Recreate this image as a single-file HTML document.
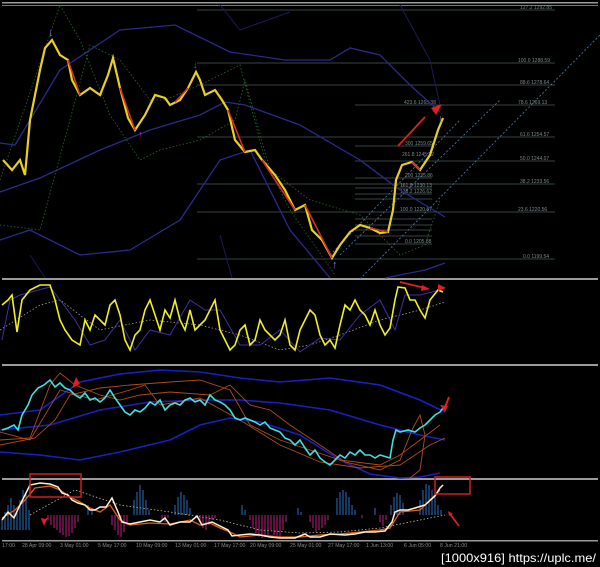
<!DOCTYPE html>
<html><head><meta charset="utf-8"><style>
html,body{margin:0;padding:0;background:#000;width:600px;height:567px;overflow:hidden}
svg{display:block}
text{font-family:"Liberation Sans",sans-serif}
</style></head><body>
<svg width="600" height="567" viewBox="0 0 600 567" xmlns="http://www.w3.org/2000/svg">
<rect width="600" height="567" fill="#000"/>
<!-- separators -->
<rect x="2" y="2" width="596" height="1.5" fill="#9a9a9a"/>
<rect x="2" y="5" width="596" height="1" fill="#777"/>
<rect x="2" y="278" width="596" height="2" fill="#9a9a9a"/>
<rect x="2" y="364" width="596" height="2" fill="#9a9a9a"/>
<rect x="2" y="478" width="596" height="2" fill="#9a9a9a"/>
<rect x="2" y="540" width="596" height="1.5" fill="#9a9a9a"/>

<!-- PANEL 1 fib lines -->
<g stroke="#4a5a5a" stroke-width="0.8">
<line x1="197" y1="10" x2="555" y2="10"/><line x1="197" y1="63" x2="555" y2="63"/>
<line x1="197" y1="85" x2="555" y2="85"/><line x1="355" y1="105" x2="555" y2="105"/>
<line x1="197" y1="137" x2="555" y2="137"/><line x1="355" y1="161" x2="555" y2="161"/>
<line x1="197" y1="184" x2="555" y2="184"/><line x1="197" y1="212" x2="555" y2="212"/>
<line x1="197" y1="259" x2="555" y2="259"/>
<line x1="355" y1="146" x2="432" y2="146"/><line x1="355" y1="178" x2="432" y2="178"/>
<line x1="355" y1="188" x2="432" y2="188"/><line x1="355" y1="194" x2="432" y2="194"/>
<line x1="355" y1="199" x2="432" y2="199"/><line x1="355" y1="219" x2="432" y2="219"/>
<line x1="355" y1="225" x2="432" y2="225"/><line x1="355" y1="230" x2="432" y2="230"/>
<line x1="355" y1="236" x2="432" y2="236"/><line x1="355" y1="244" x2="432" y2="244"/>
</g>
<g fill="#7a8a8a" font-size="5">
<text x="520" y="9">127.2 1292.85</text><text x="518" y="62">100.0 1288.59</text>
<text x="520" y="84">88.6 1278.64</text><text x="518" y="104">78.6 1269.13</text>
<text x="520" y="136">61.6 1254.57</text><text x="520" y="160">50.0 1244.07</text>
<text x="520" y="183">38.2 1233.56</text><text x="518" y="211">23.6 1220.56</text>
<text x="523" y="258">0.0 1199.54</text>
<text x="404" y="104">423.6 1265.38</text><text x="405" y="145">300 1259.65</text>
<text x="402" y="156">261.8 1245.12</text><text x="405" y="177">200 1235.86</text>
<text x="400" y="187">161.8 1230.13</text><text x="400" y="193">138.2 1226.62</text>
<text x="400" y="211">100.0 1220.87</text><text x="405" y="243">0.0 1205.88</text>
</g>
<!-- diagonal dotted -->
<g stroke="#4f7fae" stroke-width="0.8" stroke-dasharray="2,2" fill="none">
<line x1="340" y1="255" x2="500" y2="100"/><line x1="360" y1="279" x2="600" y2="35"/>
<line x1="330" y1="255" x2="460" y2="120"/>
</g>
<!-- bollinger bands -->
<g fill="none" stroke="#2a2a8a" stroke-width="1.3">
<path d="M0,143 L15,145 L60,70 L120,30 L175,25 L230,52 L285,60 L330,60 L350,48 L380,55 L410,85 L440,112"/>
<path d="M0,192 L40,178 L100,150 L150,130 L200,115 L225,102 L245,105 L300,125 L360,160 L400,190 L445,217"/>
<path d="M0,240 L30,230 L80,255 L130,250 L180,220 L220,160 L250,150 L290,230 L330,278"/>
<path d="M385,278 L425,270 L445,263"/>
</g>
<g fill="none" stroke="#1a1a5a" stroke-width="1">
<path d="M220,5 L240,30 L290,12"/><path d="M400,5 L430,60 L440,105"/><path d="M30,255 L45,278"/><path d="M220,235 L232,278"/>
</g>
<g fill="none" stroke="#2a6a2a" stroke-width="0.8" stroke-dasharray="1.5,2">
<path d="M0,225 L40,230 L70,120 L90,45 L120,60 L150,100 L165,100 L200,85 L240,65 L265,160 L290,210 L335,275"/>
<path d="M0,180 L60,5 L80,40 L110,115 L140,160 L160,150 L200,140 L235,120 L245,80 L270,170 L310,200 L360,215 L400,255 L425,245 L440,200"/>
</g>
<!-- price -->
<polyline fill="none" stroke="#e8d020" stroke-width="2.2" points="3,160 12,170 20,160 25,175 30,120 40,70 45,48 52,40 60,55 68,60 72,80 80,95 90,88 100,95 108,75 113,58 120,88 128,118 135,130 145,115 155,95 165,98 170,105 180,100 188,88 196,72 200,80 205,95 215,90 222,100 228,110 235,140 245,152 255,150 262,160 275,175 285,190 295,210 305,205 312,230 322,240 332,258 340,245 350,232 360,225 370,228 380,233 388,232 393,210 396,180 402,165 412,162 420,170 430,155 438,130 443,118"/>
<g stroke="#d03020" stroke-width="1.6" fill="none">
<path d="M68,60 L80,95"/><path d="M120,88 L135,130"/><path d="M228,110 L245,152"/><path d="M262,160 L295,210"/><path d="M305,205 L332,258"/><path d="M370,228 L388,232"/><path d="M412,162 L420,170"/><path d="M175,102 L188,88"/>
</g>
<!-- arrows markers -->
<text x="48" y="36" fill="#8070e0" font-size="11">↓</text>
<text x="193" y="68" fill="#a040c0" font-size="9">↓</text>
<text x="138" y="137" fill="#a040c0" font-size="9">↑</text>
<text x="332" y="268" fill="#8070e0" font-size="11">↑</text>
<text x="438" y="122" fill="#7080e0" font-size="11">↓</text>
<path d="M398,146 L425,117" stroke="#e02020" stroke-width="1.8"/>
<path d="M436,115 L442,104 L431,108 Z" fill="#e02020"/>

<!-- PANEL 2 -->
<path d="M0,330 L40,305 L60,300 L100,330 L150,320 L200,325 L240,335 L280,350 L310,345 L340,335 L380,320 L420,310 L445,302" stroke="#b0a080" stroke-width="0.8" stroke-dasharray="1.5,2" fill="none"/>
<polyline fill="none" stroke="#4030a0" stroke-width="1" points="2,340 10,300 20,295 50,287 60,300 75,320 90,345 105,340 120,320 135,350 150,330 170,335 190,300 205,310 220,310 240,345 260,345 280,330 300,352 320,338 340,340 360,315 380,300 395,330 405,295 420,295 440,290"/>
<polyline fill="none" stroke="#f0f020" stroke-width="1.6" points="2,305 8,300 12,295 17,332 22,300 30,290 40,285 50,285 55,300 60,320 65,330 72,340 80,345 85,320 90,330 95,315 100,320 105,325 110,305 115,300 120,315 125,340 130,350 135,335 140,330 145,310 150,300 155,315 160,330 165,310 170,318 175,300 180,320 185,330 190,310 195,330 200,325 205,320 210,310 215,300 220,330 225,340 230,350 235,345 240,330 245,325 250,345 255,340 260,320 265,330 270,335 275,340 280,335 285,320 290,345 295,350 300,330 305,320 310,310 315,315 320,335 325,345 330,340 335,348 340,325 345,305 350,310 355,300 360,310 365,315 370,325 375,310 380,325 385,335 390,328 395,300 398,287 405,288 410,300 415,300 420,310 425,318 430,300 438,290 443,292"/>
<path d="M400,282 L425,288" stroke="#e02020" stroke-width="1.8"/><path d="M422,285 L430,289 L421,291Z" fill="#e02020"/>
<path d="M438,284 L446,288 L438,291Z" fill="#e02020"/>

<!-- PANEL 3 -->
<g fill="none" stroke="#1a20c0" stroke-width="1.6">
<path d="M0,415 L40,410 L80,382 L120,374 L160,370 L200,372 L240,378 L280,382 L330,378 L380,385 L420,400 L445,412"/>
<path d="M0,430 L50,425 L100,410 L150,402 L200,400 L240,400 L280,403 L330,410 L380,425 L420,435 L445,440"/>
<path d="M0,452 L40,455 L80,460 L120,452 L170,440 L200,425 L230,418 L260,422 L300,435 L340,460 L370,474 L400,478 L420,477 L440,473"/>
</g>
<g fill="none" stroke="#b04a18" stroke-width="0.9">
<path d="M0,440 L30,438 L50,385 L60,373 L75,385 L100,395 L120,400 L140,395 L170,392 L210,395 L230,385 L250,405 L270,410 L290,425 L320,445 L345,462 L380,470 L400,460 L412,430 L420,415 L425,435 L420,470 L410,478"/>
<path d="M0,445 L35,438 L55,420 L70,395 L100,388 L130,385 L170,382 L200,380 L230,390 L250,425 L280,440 L310,450 L340,460 L380,465 L400,455 L420,440 L440,425"/>
<path d="M0,432 L30,440 L60,390 L95,400 L130,390 L145,385 L160,405 L200,398 L240,420 L280,445 L320,462 L360,468 L400,465 L430,445 L445,438"/>
</g>
<polyline fill="none" stroke="#40e0e0" stroke-width="1.6" points="2,430 8,428 14,425 18,430 22,415 28,405 32,395 38,388 44,385 50,380 55,387 60,383 65,388 70,390 75,395 80,398 85,393 90,400 95,398 100,402 105,398 110,390 115,398 120,405 125,412 130,415 135,410 140,412 145,408 150,402 155,405 160,400 165,410 170,405 175,403 180,405 185,400 190,398 195,402 200,400 205,405 210,395 215,400 220,402 225,405 230,410 235,418 240,420 245,418 250,420 255,422 260,425 265,422 270,428 275,430 280,432 285,438 290,440 295,445 300,440 305,448 310,455 315,450 320,458 325,462 330,465 335,460 340,455 345,458 350,452 355,455 360,450 365,455 370,455 375,458 380,455 390,458 393,440 396,430 400,432 408,430 415,432 420,428 425,425 430,420 435,415 440,412 443,408"/>
<path d="M76,377 L72,388 L80,384Z" fill="#e02020"/>
<path d="M449,397 L444,410" stroke="#e02020" stroke-width="2"/><path d="M440,405 L445,412 L448,406Z" fill="#e02020"/>

<!-- PANEL 4 -->
<g stroke="#2a70c0" stroke-width="1">
<path d="M2,530 V520 M5,530 V512 M8,530 V505 M11,530 V498 M14,530 V505 M17,530 V510 M20,530 V500 M23,530 V490 M26,530 V492 M29,530 V510"/>
<path d="M88,515 V505 M92,515 V510"/>
<path d="M134,515 V500 M137,515 V492 M140,515 V485 M143,515 V490 M146,515 V500 M149,515 V510"/>
<path d="M175,515 V505 M178,515 V497 M181,515 V492 M184,515 V495 M187,515 V500 M190,515 V508"/>
<path d="M242,515 V505 M245,515 V510 M298,515 V508 M301,515 V512"/>
<path d="M337,515 V498 M340,515 V492 M343,515 V490 M346,515 V492 M349,515 V497 M352,515 V505 M355,515 V510"/>
<path d="M375,515 V508 M391,515 V505 M394,515 V497 M397,515 V493 M400,515 V495 M403,515 V503"/>
<path d="M420,515 V500 M423,515 V490 M426,515 V484 M429,515 V485 M432,515 V490 M435,515 V497 M438,515 V505 M441,515 V510"/>
</g>
<g stroke="#c02080" stroke-width="1">
<path d="M48,515 V520 M51,515 V525 M54,515 V528 M57,515 V530 M60,515 V533 M63,515 V535 M66,515 V537 M69,515 V536 M72,515 V533 M75,515 V528 M78,515 V522"/>
<path d="M112,515 V525 M115,515 V530 M118,515 V535 M121,515 V537 M124,515 V532 M127,515 V525"/>
<path d="M162,515 V520 M165,515 V522 M168,515 V518"/>
<path d="M200,515 V522 M203,515 V528 M206,515 V530 M209,515 V525 M212,515 V520 M215,515 V518"/>
<path d="M250,515 V520 M253,515 V528 M256,515 V533 M259,515 V537 M262,515 V538 M265,515 V537 M268,515 V535 M271,515 V530 M274,515 V535 M277,515 V538 M280,515 V537 M283,515 V530 M286,515 V522"/>
<path d="M310,515 V522 M313,515 V528 M316,515 V532 M319,515 V530 M322,515 V528 M325,515 V525 M328,515 V520"/>
<path d="M362,515 V518 M380,515 V522 M383,515 V526 M386,515 V520"/>
</g>
<path d="M30,515 L75,490 L120,505 L170,512 L220,520 L260,530 L300,533 L340,532 L380,528 L420,520 L445,515" stroke="#c0c0a0" stroke-width="0.8" stroke-dasharray="1.5,2" fill="none"/>
<polyline fill="none" stroke="#e06020" stroke-width="1.3" points="2,518 15,510 25,500 35,488 50,486 60,490 70,497 80,502 90,508 100,512 110,505 120,520 130,525 150,523 170,524 190,520 200,525 210,523 220,528 230,532 240,537 260,535 280,537 300,537 320,535 340,534 360,532 380,530 390,528 395,520 400,512 420,510 430,500 440,490"/>
<polyline fill="none" stroke="#fff0d0" stroke-width="1.5" points="2,520 8,512 14,518 20,505 25,495 30,485 40,483 50,484 58,487 62,493 68,495 72,500 78,503 85,505 90,510 95,510 100,507 106,507 112,498 118,512 122,522 130,524 140,522 150,520 160,522 165,518 170,525 180,522 190,522 197,516 202,525 212,522 220,526 228,530 232,536 240,535 250,534 260,535 270,537 280,538 295,538 305,534 310,537 320,537 330,534 345,535 355,534 365,532 375,532 385,531 392,522 395,512 400,510 408,510 415,508 425,505 435,496 440,488 443,485"/>
<rect x="30" y="474" width="51" height="23" fill="none" stroke="#d02020" stroke-width="1.5"/>
<rect x="435" y="477" width="35" height="17" fill="none" stroke="#d02020" stroke-width="1.5"/>
<path d="M44,524 L42,519 L46,520Z M44,523 L47,518" fill="#e02020" stroke="#e02020" stroke-width="1.5"/>
<path d="M450,514 L459,526" stroke="#e02020" stroke-width="1.8"/>
<path d="M448,511 L453,514 L449,516Z" fill="#e02020"/>

<!-- time axis -->
<g fill="#8a8a8a" font-size="5.2">
<text x="2" y="547">17:00</text><text x="22" y="547">28 Apr 09:00</text><text x="60" y="547">3 May 01:00</text>
<text x="98" y="547">5 May 17:00</text><text x="136" y="547">10 May 09:00</text><text x="175" y="547">13 May 01:00</text>
<text x="214" y="547">17 May 17:00</text><text x="250" y="547">20 May 09:00</text><text x="290" y="547">25 May 01:00</text>
<text x="328" y="547">27 May 17:00</text><text x="366" y="547">1 Jun 13:00</text><text x="404" y="547">6 Jun 05:00</text>
<text x="440" y="547">8 Jun 21:00</text>
</g>
<text x="441" y="562" fill="#fff" font-size="12" font-family="Liberation Sans Narrow, Liberation Sans, sans-serif" textLength="155" lengthAdjust="spacingAndGlyphs">[1000x916] https://uplc.me/</text>
</svg>
</body></html>
